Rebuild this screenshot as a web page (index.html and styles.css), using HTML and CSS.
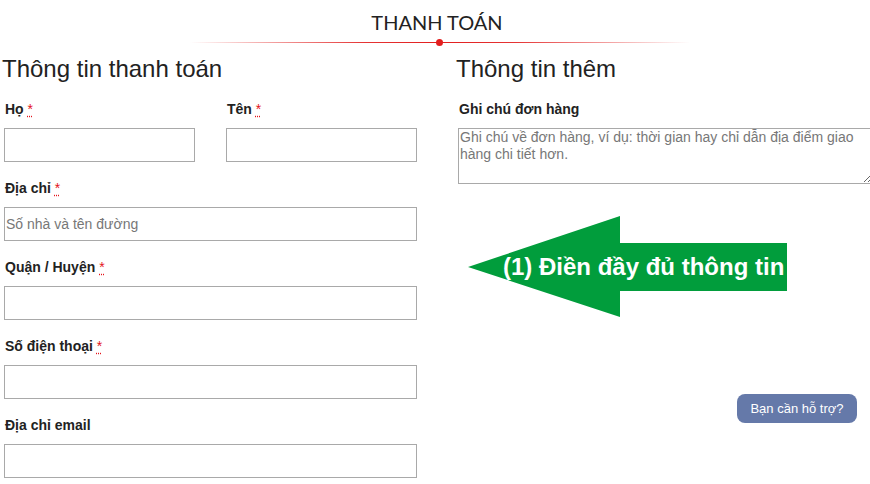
FILE: index.html
```html
<!DOCTYPE html>
<html lang="vi">
<head>
<meta charset="utf-8">
<title>Thanh toán</title>
<link rel="stylesheet" href="styles.css">
</head>
<body>
<div class="page">
  <header class="title">
    <h2>THANH TOÁN</h2>
    <div class="divider"><span class="dot"></span></div>
  </header>
  <div class="cols">
    <section class="col billing">
      <h3>Thông tin thanh toán</h3>
      <div class="pair">
        <div class="field"><label>Họ <abbr>*</abbr></label><input type="text"></div>
        <div class="field"><label>Tên <abbr>*</abbr></label><input type="text"></div>
      </div>
      <div class="field"><label>Địa chỉ <abbr>*</abbr></label><input type="text" placeholder="Số nhà và tên đường"></div>
      <div class="field"><label>Quận / Huyện <abbr>*</abbr></label><input type="text"></div>
      <div class="field"><label>Số điện thoại <abbr>*</abbr></label><input type="text"></div>
      <div class="field"><label>Địa chỉ email</label><input type="text"></div>
    </section>
    <section class="col extra">
      <h3>Thông tin thêm</h3>
      <div class="field"><label>Ghi chú đơn hàng</label><textarea placeholder="Ghi chú về đơn hàng, ví dụ: thời gian hay chỉ dẫn địa điểm giao hàng chi tiết hơn."></textarea></div>
    </section>
  </div>
  <div class="arrow">
    <svg width="320" height="102" viewBox="0 0 320 102"><polygon points="0,51 152,0 152,27 319,27 319,75 152,75 152,101" fill="#019d3c"/></svg>
    <span class="arrow-text">(1) Điền đầy đủ thông tin</span>
  </div>
  <button class="help">Bạn cần hỗ trợ?</button>
</div>
</body>
</html>
```
FILE: styles.css
```css
html, body {
  margin: 0;
  padding: 0;
  background: #fff;
  overflow: hidden;
}
body {
  font-family: "Liberation Sans", Arial, sans-serif;
  color: #222;
  width: 870px;
  height: 484px;
}
.page {
  position: relative;
  width: 870px;
  height: 484px;
}
.title {
  padding-top: 8px;
}
.title h2 {
  margin: 0;
  text-align: center;
  font-family: Lato, "Liberation Sans", sans-serif;
  font-weight: 400;
  font-size: 20px;
  line-height: 28px;
  color: #222;
  padding-left: 4px;
}
.divider {
  position: relative;
  width: 500px;
  height: 1px;
  margin: 6px 0 0 190px;
  background: linear-gradient(to right, rgba(226,30,30,0) 0%, rgba(226,30,30,0.9) 35%, #e21e1e 50%, rgba(226,30,30,0.9) 65%, rgba(226,30,30,0) 100%);
}
.dot {
  position: absolute;
  left: 246px;
  top: -3px;
  width: 7px;
  height: 7px;
  border-radius: 50%;
  background: #e21e1e;
}
.cols {
  display: flex;
  gap: 41px;
  padding-left: 4px;
  margin-top: 12px;
}
.col h3 {
  margin: 0 0 17px -2px;
  font-weight: 400;
  font-size: 24px;
  line-height: 27px;
  color: #222;
}
.billing {
  width: 413px;
  flex: none;
}
.extra {
  width: 420px;
  flex: none;
}
.pair {
  display: grid;
  grid-template-columns: 191px 191px;
  column-gap: 31px;
}
.field {
  margin-bottom: 16px;
}
.field label {
  display: block;
  font-size: 14px;
  font-weight: 700;
  line-height: 20px;
  margin: 0 0 9px 1px;
  color: #222;
}
abbr {
  color: #e4141b;
  text-decoration: underline dotted;
  text-underline-offset: 2px;
  font-weight: 400;
}
input {
  display: block;
  box-sizing: border-box;
  width: 100%;
  height: 34px;
  margin: 0;
  padding: 0 1px;
  border: 1px solid #a9a9a9;
  border-radius: 0;
  font-family: "Liberation Sans", Arial, sans-serif;
  font-size: 14px;
  color: #222;
  background: #fff;
}
input::placeholder, textarea::placeholder {
  color: #777;
}
textarea {
  display: block;
  box-sizing: border-box;
  width: 415px;
  height: 56px;
  margin: 0;
  padding: 0 1px;
  border: 1px solid #a9a9a9;
  border-radius: 0;
  font-family: "Liberation Sans", Arial, sans-serif;
  font-size: 14px;
  line-height: 17px;
  resize: both;
}
.arrow {
  position: absolute;
  left: 468px;
  top: 216px;
  width: 320px;
  height: 102px;
}
.arrow svg {
  display: block;
}
.arrow-text {
  position: absolute;
  left: 35px;
  top: 36px;
  font-size: 24px;
  font-weight: 700;
  line-height: 30px;
  color: #fff;
  white-space: nowrap;
}
.help {
  position: absolute;
  left: 737px;
  top: 394px;
  width: 120px;
  height: 29px;
  border: 0;
  border-radius: 8px;
  background: #6579a9;
  color: #fff;
  font-family: "Liberation Sans", Arial, sans-serif;
  font-size: 13px;
  padding: 0;
}
```
